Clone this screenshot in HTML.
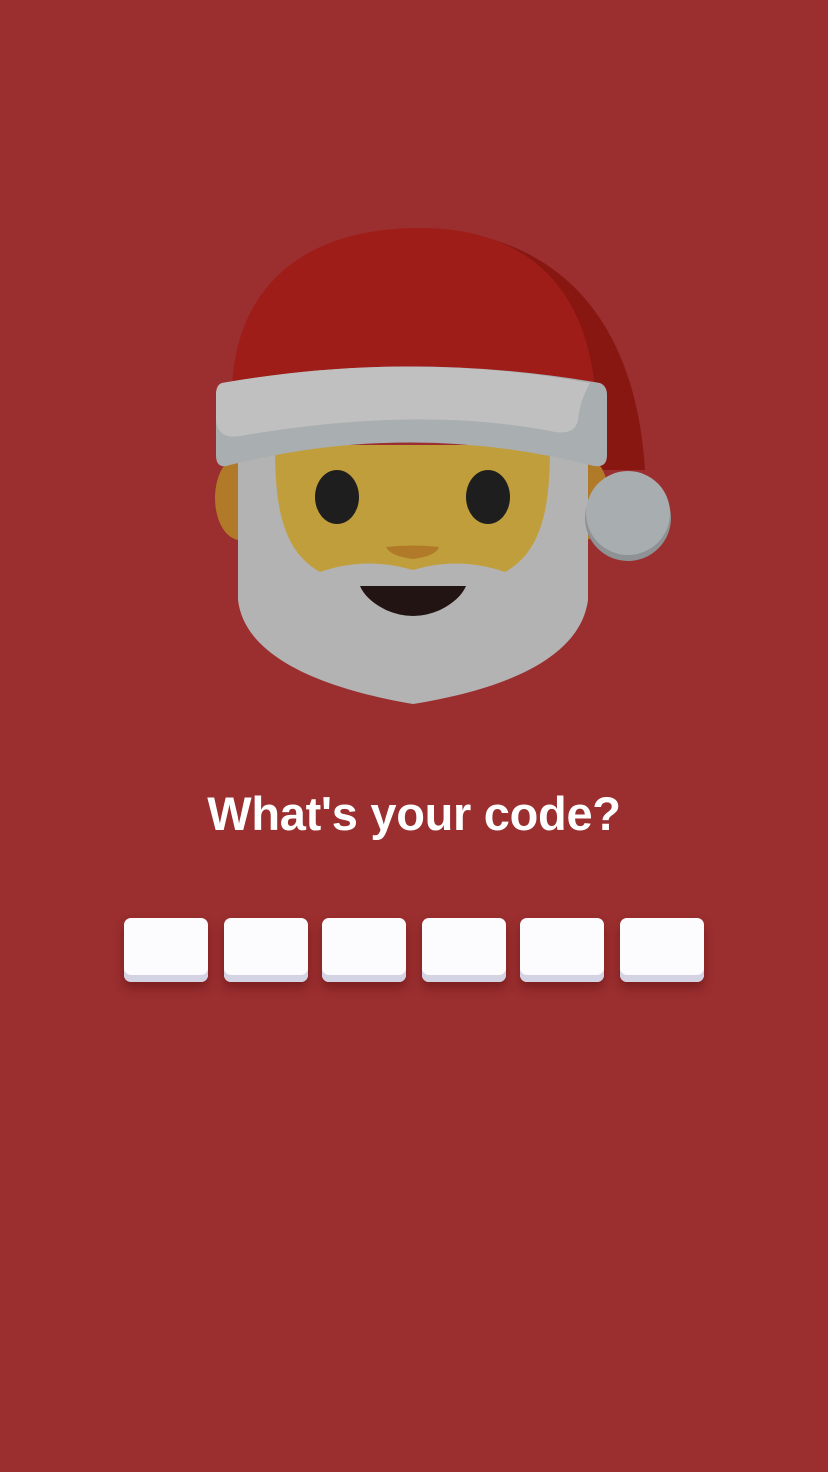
<!DOCTYPE html>
<html><head><style>
html,body{margin:0;padding:0;background:#9b2e2f;}
body{width:828px;height:1472px;position:relative;overflow:hidden;font-family:"Liberation Sans",sans-serif;}
h1{position:absolute;top:786px;left:0;width:828px;text-align:center;margin:0;color:#fff;font-size:47px;font-weight:bold;letter-spacing:-0.3px;}
.box{position:absolute;top:918px;width:84px;height:64px;border-radius:7px;background:#fcfcfe;box-shadow:inset 0 -7px 0 #d3d3e3,0 6px 10px rgba(60,0,0,.35);}
</style></head><body>
<svg width="828" height="1472" style="position:absolute;left:0;top:0">
<path d="M420 228 C550 232 635 310 645 470 L598 470 L592 390 C585 300 530 235 420 228Z" fill="#881712"/>
<path d="M232 390 C235 290 300 228 420 228 C520 228 585 280 595 390Z" fill="#9e1d18"/>
<ellipse cx="240" cy="498" rx="25" ry="42" fill="#b07a28"/>
<ellipse cx="584" cy="498" rx="25" ry="42" fill="#b07a28"/>
<path d="M238 450 L588 450 L588 600 C580 660 500 690 413 704 C330 690 245 660 238 600Z" fill="#b3b3b3"/>
<path d="M275 445 L550 445 C550 500 545 550 505 572 C470 560 440 562 413 570 C385 562 355 560 320 572 C280 550 275 500 275 445Z" fill="#c09e3c"/>
<ellipse cx="337" cy="497" rx="22" ry="27" fill="#1e1e1e"/>
<ellipse cx="488" cy="497" rx="22" ry="27" fill="#1e1e1e"/>
<path d="M386 547 Q413 544 439 547 Q436 556 413 559 Q390 556 386 547Z" fill="#b07a28"/>
<path d="M360 586 L466 586 Q460 600 440 610 Q413 622 386 610 Q366 600 360 586Z" fill="#211413"/>
<path d="M222 383 Q410 350 600 383 Q607 386 607 395 L607 455 Q607 470 590 465 Q410 420 230 465 Q216 470 216 455 L216 395 Q216 385 222 383Z" fill="#a9aeb0"/>
<path d="M222 383 Q410 350 590 383 Q580 400 578 420 Q575 435 555 432 Q420 405 240 436 Q218 440 216 420 L216 395 Q216 385 222 383Z" fill="#c0c0c0"/>
<circle cx="628" cy="518" r="43" fill="#8e9294"/>
<circle cx="628" cy="513" r="42" fill="#a8adaf"/>
</svg>
<h1>What's your code?</h1>
<div class="box" style="left:124px"></div>
<div class="box" style="left:224px"></div>
<div class="box" style="left:322px"></div>
<div class="box" style="left:422px"></div>
<div class="box" style="left:520px"></div>
<div class="box" style="left:620px"></div>
</body></html>
